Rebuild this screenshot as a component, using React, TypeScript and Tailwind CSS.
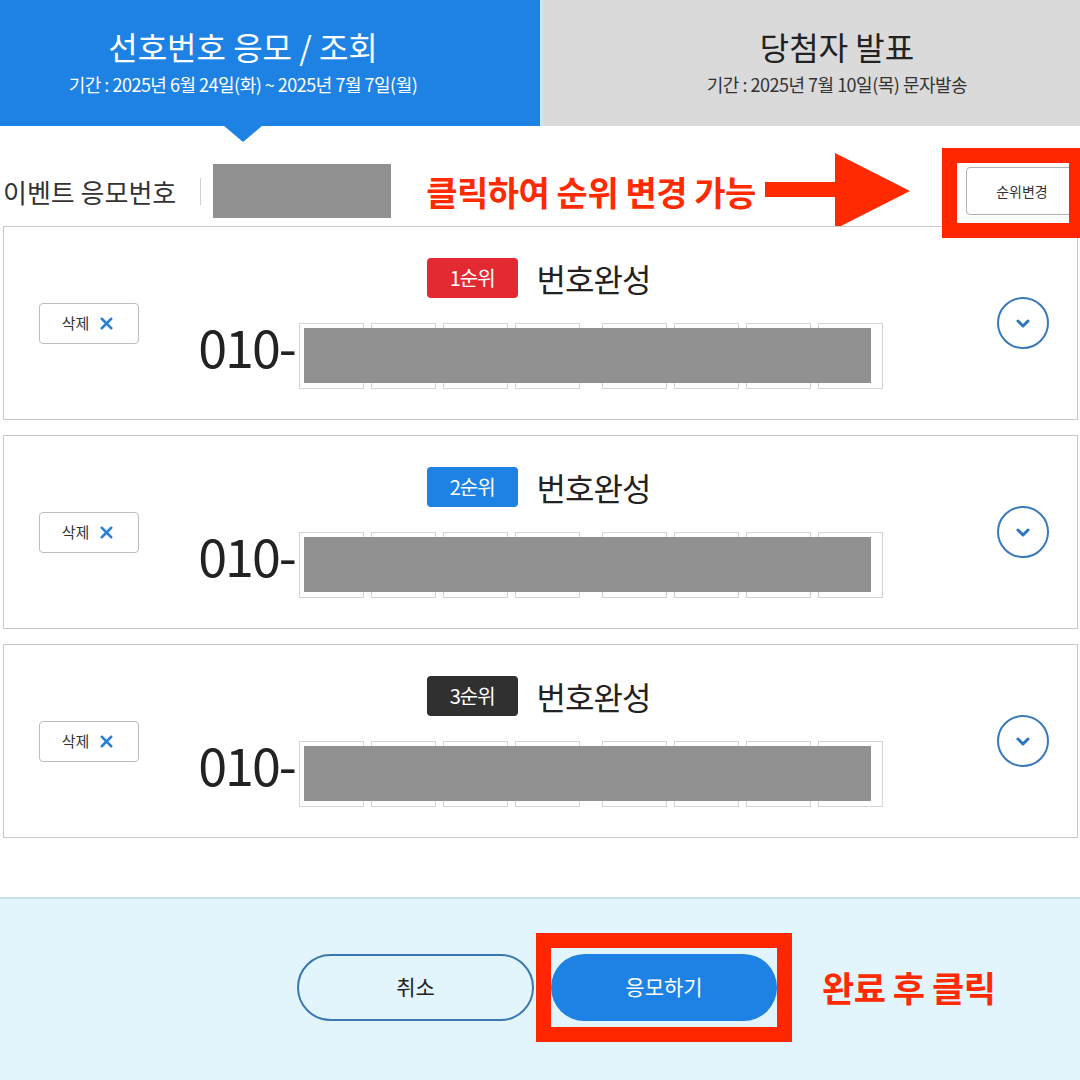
import { X } from "lucide-react";

type Rank = { label: string; color: string };

const ranks: Rank[] = [
  { label: "1순위", color: "bg-[#e32a33]" },
  { label: "2순위", color: "bg-[#1e82e4]" },
  { label: "3순위", color: "bg-[#303030]" },
];

function DigitBoxes() {
  return (
    <div className="relative flex items-center">
      <div className="flex gap-[7px]">
        {[0, 1, 2, 3].map((i) => (
          <div key={i} className="w-[65px] h-[66px] border border-[#d4d4d4] bg-white" />
        ))}
      </div>
      <div className="flex gap-[7px] ml-[22px]">
        {[0, 1, 2, 3].map((i) => (
          <div key={i} className="w-[65px] h-[66px] border border-[#d4d4d4] bg-white" />
        ))}
      </div>
      {/* masked number */}
      <div className="absolute left-[5px] right-[12px] top-[5px] bottom-[6px] bg-[#919191]" />
    </div>
  );
}

function RankCard({ rank }: { rank: Rank }) {
  return (
    <div className="flex items-center h-[194px] border border-[#c8c8c8] bg-white">
      <div className="w-[190px] pl-[35px] flex items-center">
        <button className="w-[100px] h-[41px] flex items-center justify-center gap-[8px] border border-[#bdbdbd] rounded-[4px] bg-white text-[15px] text-[#333]">
          삭제 <X size={19} strokeWidth={3.2} className="text-[#2b7fd6]" />
        </button>
      </div>
      <div className="flex-1 flex flex-col items-center">
        <div className="flex items-center gap-[19px] mb-[18px] mr-[4px]">
          <span className={`${rank.color} w-[91px] h-[40px] rounded-[4px] flex items-center justify-center text-white text-[20px] tracking-[-1px]`}>
            {rank.label}
          </span>
          <span className="text-[32px] text-[#222] tracking-[-1px]">번호완성</span>
        </div>
        <div className="flex items-center">
          <span className="text-[52px] leading-none text-[#222] tracking-[-2px] mr-[4px] mb-[20px]">010-</span>
          <DigitBoxes />
        </div>
      </div>
      <div className="w-[190px] pr-[28px] flex justify-end">
        <div className="w-[52px] h-[52px] rounded-full border-2 border-[#3a7ab8] flex items-center justify-center">
          <svg width="14" height="9" viewBox="0 0 14 9" fill="none">
            <path d="M2 2l5 5 5-5" stroke="#2e75c0" strokeWidth="3" strokeLinecap="round" strokeLinejoin="round" />
          </svg>
        </div>
      </div>
    </div>
  );
}

export default function App() {
  return (
    <div className="relative w-[1080px] h-[1080px] overflow-hidden bg-white font-['Noto_Sans_CJK_KR','Noto_Sans',sans-serif]">
      {/* tabs */}
      <div className="flex h-[126px]">
        <div className="relative w-1/2 bg-[#1e82e4] flex flex-col items-center pt-[25px] pr-[54px] text-white">
          <div className="text-[32px] leading-[42px]">선호번호 응모 / 조회</div>
          <div className="text-[18px] leading-[24px] tracking-[-0.5px] mt-[5px]">기간 : 2025년 6월 24일(화) ~ 2025년 7월 7일(월)</div>
          <div className="absolute left-[223px] top-[125px] w-0 h-0 border-l-[20px] border-r-[20px] border-t-[17px] border-l-transparent border-r-transparent border-t-[#1e82e4]" />
        </div>
        <div className="w-1/2 bg-[#dadada] border-l-[3px] border-[#cde6f7] flex flex-col items-center pt-[25px] pl-[51px] text-[#222]">
          <div className="text-[32px] leading-[42px]">당첨자 발표</div>
          <div className="text-[18px] leading-[24px] tracking-[-0.5px] mt-[5px] text-[#333]">기간 : 2025년 7월 10일(목) 문자발송</div>
        </div>
      </div>

      {/* event number row */}
      <div className="flex items-center h-[100px] pt-[30px] pl-[3px] pr-[2px]">
        <span className="text-[26px] text-[#333]">이벤트 응모번호</span>
        <div className="w-px h-[27px] bg-[#d0d0d0] ml-[24px]" />
        <div className="w-[178px] h-[54px] bg-[#919191] ml-[12px]" />
        <span className="ml-[35px] text-[34px] font-bold text-[#ff2a00] tracking-[-0.5px]">클릭하여 순위 변경 가능</span>
        <svg width="146" height="76" viewBox="0 0 146 76" className="ml-[9px]">
          <rect x="0" y="29" width="74" height="15" fill="#ff2a00" />
          <polygon points="70,0 145,38 70,76" fill="#ff2a00" />
        </svg>
        <button className="ml-auto w-[112px] h-[48px] shrink-0 border border-[#b0b0b0] rounded-[4px] bg-white text-[14px] text-[#333]">
          순위변경
        </button>
      </div>

      {/* annotation frame */}
      <div className="absolute left-[942px] top-[148px] w-[142px] h-[90px] border-[15px] border-[#ff2600]" />

      {/* cards */}
      <div className="flex flex-col gap-[15px] pl-[3px] pr-[2px]">
        {ranks.map((r) => (
          <RankCard key={r.label} rank={r} />
        ))}
      </div>

      {/* footer */}
      <div className="mt-[59px] h-[184px] bg-[#e2f5fd] border-t-2 border-[#c6dfea] flex items-center pl-[297px] pb-[6px]">
        <button className="w-[237px] h-[67px] rounded-full border-2 border-[#3a78b0] bg-[#e2f5fd] text-[21px] text-[#222]">
          취소
        </button>
        <div className="ml-[2px] border-[15px] border-[#ff2600] py-[6px]">
          <button className="w-[226px] h-[67px] rounded-full bg-[#1e82e4] text-[21px] text-white">
            응모하기
          </button>
        </div>
        <span className="ml-[30px] text-[35px] font-bold text-[#ff2a00] tracking-[-0.5px]">완료 후 클릭</span>
      </div>
    </div>
  );
}
